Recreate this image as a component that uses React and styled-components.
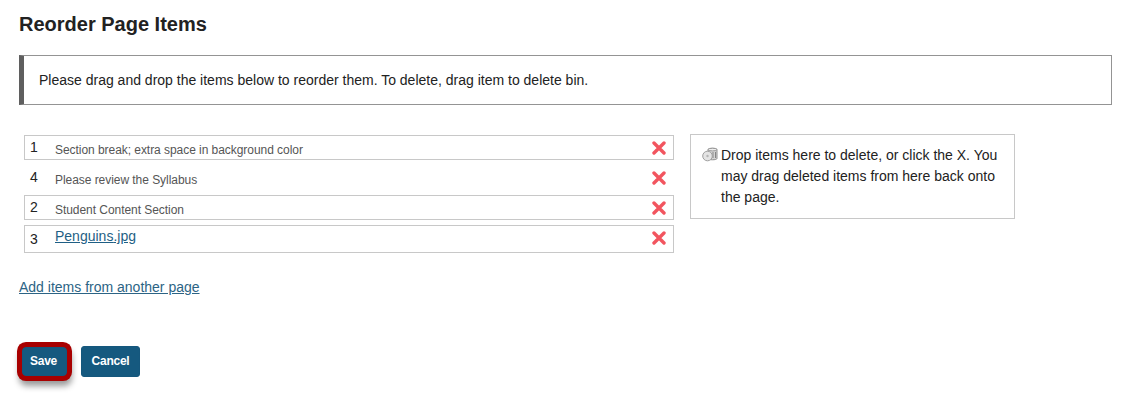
import React from 'react';
import styled, { createGlobalStyle } from 'styled-components';

const GlobalStyle = createGlobalStyle`
  html, body { margin: 0; padding: 0; background: #fff; }
  body { font-family: "Liberation Sans", Arial, sans-serif; color: #222; }
`;

const Page = styled.div`
  width: 1132px;
  height: 406px;
  box-sizing: border-box;
  padding: 12px 20px 0 19px;
  overflow: hidden;
`;

const Title = styled.h1`
  margin: 0;
  font-size: 20px;
  line-height: 24px;
  font-weight: bold;
  color: #222;
`;

const Notice = styled.div`
  margin-top: 19px;
  height: 50px;
  box-sizing: border-box;
  border: 1px solid #949494;
  border-left: 5px solid #5f5f5f;
  padding: 0 15px;
  display: flex;
  align-items: center;
  font-size: 14px;
  color: #222;
`;

const Columns = styled.div`
  margin-top: 29px;
  display: flex;
  align-items: flex-start;
  gap: 16px;
`;

const ItemList = styled.ul`
  list-style: none;
  margin: 1px 0 0 5px;
  padding: 0;
  width: 650px;
  display: flex;
  flex-direction: column;
  gap: 5px;
`;

const Row = styled.li`
  box-sizing: border-box;
  height: ${(p) => (p.$tall ? '28px' : '25px')};
  border: 1px solid ${(p) => (p.$plain ? 'transparent' : '#c8c8c8')};
  display: flex;
  align-items: center;
  padding: 0 7px 0 5px;
`;

const Num = styled.span`
  width: 25px;
  flex: none;
  font-size: 14px;
  line-height: 16px;
  color: #222;
  padding-bottom: ${(p) => (p.$low ? '0' : '2px')};
`;

const Label = styled.span`
  flex: 1;
  font-size: 12px;
  line-height: 14px;
  letter-spacing: -0.05px;
  color: #555;
  padding-top: 4px;
`;

const FileLink = styled.a`
  flex: 1;
  font-size: 14px;
  line-height: 16px;
  color: #1f5f85;
  padding-bottom: 6px;
  span { text-decoration: underline; }
`;

const DeleteIcon = styled.svg`
  width: 14px;
  height: 14px;
  flex: none;
  display: block;
  margin-bottom: ${(p) => (p.$raised ? '2px' : '0')};
`;

const Bin = styled.div`
  width: 325px;
  height: 85px;
  box-sizing: border-box;
  border: 1px solid #c8c8c8;
  padding: 10px 11px 0 11px;
  display: flex;
  align-items: flex-start;
  gap: 3px;
  font-size: 14px;
  line-height: 21px;
  color: #222;
`;

const BinIcon = styled.svg`
  width: 16px;
  height: 15px;
  flex: none;
  margin-top: 2px;
`;

const AddLink = styled.a`
  display: block;
  margin-top: 25px;
  font-size: 14px;
  line-height: 18px;
  color: #2c6485;
  text-decoration: underline;
`;

const Actions = styled.div`
  margin-top: 50px;
  padding-left: 3px;
  display: flex;
  align-items: center;
  gap: 14px;
`;

const Button = styled.button`
  height: ${(p) => (p.$focused ? '29px' : '31px')};
  width: ${(p) => (p.$focused ? '45px' : '59px')};
  box-sizing: border-box;
  padding: 0 ${(p) => (p.$focused ? '2px' : '0')} 2px 0;
  border: 1px solid #15577d;
  border-radius: 3px;
  background: #15597f;
  color: #fff;
  font-family: inherit;
  font-size: 12px;
  font-weight: bold;
  letter-spacing: -0.25px;
  ${(p) =>
    p.$focused &&
    `
    border-radius: 4px;
    box-shadow: 0 0 0 5px #a80000, 1px 6px 6px 4px rgba(0, 0, 0, 0.4);
  `}
`;

const Cross = ({ raised }) => (
  <DeleteIcon $raised={raised} viewBox="0 0 14 14" aria-hidden="true">
    <path d="M2 2 L12 12 M12 2 L2 12" stroke="#f2555f" strokeWidth="3.4" strokeLinecap="round" />
  </DeleteIcon>
);

const items = [
  { n: 1, text: 'Section break; extra space in background color' },
  { n: 4, text: 'Please review the Syllabus', plain: true },
  { n: 2, text: 'Student Content Section' },
];

export default function App() {
  return (
    <>
      <GlobalStyle />
      <Page>
        <Title>Reorder Page Items</Title>
        <Notice>Please drag and drop the items below to reorder them. To delete, drag item to delete bin.</Notice>
        <Columns>
          <ItemList>
            {items.map((item) => (
              <Row key={item.n} $plain={item.plain}>
                <Num>{item.n}</Num>
                <Label>{item.text}</Label>
                <Cross />
              </Row>
            ))}
            <Row $tall>
              <Num $low>3</Num>
              <FileLink href="#"><span>Penguins</span>.jpg</FileLink>
              <Cross raised />
            </Row>
          </ItemList>
          <Bin>
            <BinIcon viewBox="0 0 16 15" aria-hidden="true">
              <path d="M6 2.5 C6 0.8 15 0.8 15 2.5 V11.5 C15 13.2 6 13.2 6 11.5 Z" fill="#d4d4d4" stroke="#8f8f8f" />
              <ellipse cx="10.5" cy="2.6" rx="4.5" ry="1.3" fill="#efefef" stroke="#9a9a9a" />
              <path d="M11 5v6M13.5 5v6" stroke="#858585" />
              <circle cx="5.5" cy="9" r="4.8" fill="#e4e4e4" stroke="#a0a0a0" />
              <circle cx="5.5" cy="9" r="1.2" fill="#b5b5b5" />
            </BinIcon>
            <span>Drop items here to delete, or click the X. You may drag deleted items from here back onto the page.</span>
          </Bin>
        </Columns>
        <AddLink href="#">Add items from another page</AddLink>
        <Actions>
          <Button $focused>Save</Button>
          <Button>Cancel</Button>
        </Actions>
      </Page>
    </>
  );
}
